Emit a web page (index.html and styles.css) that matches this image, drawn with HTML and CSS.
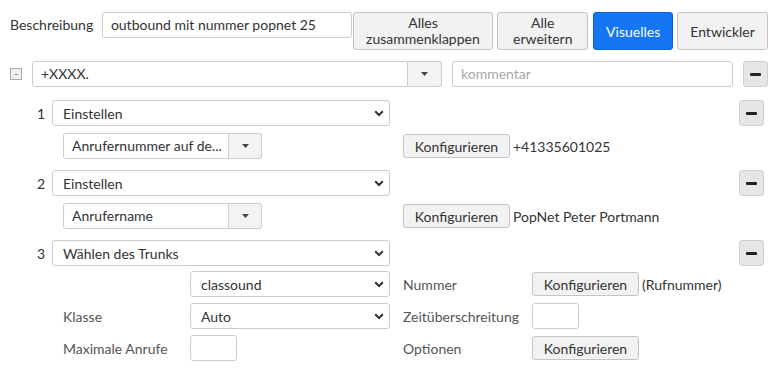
FILE: index.html
```html
<!DOCTYPE html>
<html lang="de">
<head>
<meta charset="utf-8">
<link rel="stylesheet" href="styles.css">
</head>
<body>
<div class="page">
  <div class="toolbar">
    <label class="desc-label">Beschreibung</label>
    <div class="input desc-input">outbound mit nummer popnet 25</div>
    <div class="btn two-line w-collapse"><span>Alles</span><span>zusammenklappen</span></div>
    <div class="btn two-line w-expand"><span>Alle</span><span>erweitern</span></div>
    <div class="btn primary w-visual">Visuelles</div>
    <div class="btn w-dev">Entwickler</div>
  </div>

  <div class="head-row">
    <span class="toggle">-</span>
    <div class="group head-group">
      <div class="input grow">+XXXX.</div>
      <div class="caret-btn w-caret">
        <svg width="7" height="4" viewBox="0 0 7 4"><path d="M0 0h7L3.5 4z" fill="#444"/></svg>
      </div>
    </div>
    <div class="input comment placeholder">kommentar</div>
    <div class="minus"><span></span></div>
  </div>

  <div class="steps">
    <div class="step">
      <div class="step-row">
        <span class="num">1</span>
        <div class="select step-select"><span>Einstellen</span><svg class="chev" width="10" height="7" viewBox="0 0 10 7"><path d="M1.2 1.2 5 5 8.8 1.2" fill="none" stroke="#333" stroke-width="2"/></svg></div>
        <div class="minus"><span></span></div>
      </div>
      <div class="sub-row">
        <div class="sub-left">
          <div class="group sub-group">
            <div class="input grow">Anrufernummer auf de...</div>
            <div class="caret-btn w-caret2">
              <svg width="7" height="4" viewBox="0 0 7 4"><path d="M0 0h7L3.5 4z" fill="#444"/></svg>
            </div>
          </div>
        </div>
        <div class="sub-right">
          <div class="btn small">Konfigurieren</div>
          <span class="value">+41335601025</span>
        </div>
      </div>
    </div>

    <div class="step">
      <div class="step-row">
        <span class="num">2</span>
        <div class="select step-select"><span>Einstellen</span><svg class="chev" width="10" height="7" viewBox="0 0 10 7"><path d="M1.2 1.2 5 5 8.8 1.2" fill="none" stroke="#333" stroke-width="2"/></svg></div>
        <div class="minus"><span></span></div>
      </div>
      <div class="sub-row">
        <div class="sub-left">
          <div class="group sub-group">
            <div class="input grow">Anrufername</div>
            <div class="caret-btn w-caret2">
              <svg width="7" height="4" viewBox="0 0 7 4"><path d="M0 0h7L3.5 4z" fill="#444"/></svg>
            </div>
          </div>
        </div>
        <div class="sub-right">
          <div class="btn small">Konfigurieren</div>
          <span class="value">PopNet Peter Portmann</span>
        </div>
      </div>
    </div>

    <div class="step">
      <div class="step-row">
        <span class="num">3</span>
        <div class="select step-select"><span>Wählen des Trunks</span><svg class="chev" width="10" height="7" viewBox="0 0 10 7"><path d="M1.2 1.2 5 5 8.8 1.2" fill="none" stroke="#333" stroke-width="2"/></svg></div>
        <div class="minus"><span></span></div>
      </div>
      <div class="trunk-grid">
        <span class="lbl"></span>
        <div class="select trunk-select"><span>classound</span><svg class="chev" width="10" height="7" viewBox="0 0 10 7"><path d="M1.2 1.2 5 5 8.8 1.2" fill="none" stroke="#333" stroke-width="2"/></svg></div>
        <span class="lbl rlbl">Nummer</span>
        <div class="ctrl"><div class="btn small w-conf">Konfigurieren</div><span class="value">(Rufnummer)</span></div>

        <span class="lbl">Klasse</span>
        <div class="select trunk-select"><span>Auto</span><svg class="chev" width="10" height="7" viewBox="0 0 10 7"><path d="M1.2 1.2 5 5 8.8 1.2" fill="none" stroke="#333" stroke-width="2"/></svg></div>
        <span class="lbl rlbl">Zeitüberschreitung</span>
        <div class="ctrl"><div class="input small-input"></div></div>

        <span class="lbl">Maximale Anrufe</span>
        <div class="ctrl"><div class="input small-input"></div></div>
        <span class="lbl rlbl">Optionen</span>
        <div class="ctrl"><div class="btn small w-conf">Konfigurieren</div></div>
      </div>
    </div>
  </div>
</div>
</body>
</html>
```

FILE: styles.css
```css
* { box-sizing: border-box; }
html, body { margin: 0; background: #fff; }
body {
  font-family: Lato, "Noto Sans", sans-serif;
  font-size: 14px;
  color: #333;
  width: 776px;
  height: 379px;
  overflow: hidden;
}
.page { padding: 12px 8px 0 10px; }

.toolbar { display: flex; align-items: flex-start; }
.desc-label { line-height: 26px; width: 92px; }
.input {
  height: 26px;
  border: 1px solid #ccc;
  border-radius: 3px;
  background: #fff;
  padding: 0 8px;
  line-height: 24px;
  white-space: nowrap;
  overflow: hidden;
}
.desc-input { width: 250px; }
.btn {
  border: 1px solid #c4c4c4;
  border-radius: 3px;
  background: #f2f2f2;
  color: #333;
  text-align: center;
  display: flex;
  align-items: center;
  justify-content: center;
  height: 38px;
  white-space: nowrap;
}
.two-line { flex-direction: column; line-height: 16px; padding-bottom: 1px; }
.w-collapse { width: 141px; margin-left: 1px; }
.w-expand { width: 91px; margin-left: 4px; }
.w-visual { width: 80px; margin-left: 5px; }
.w-dev { width: 91px; margin-left: 4px; }
.primary { background: #1475f5; border-color: #0f63d6; color: #fff; }

.head-row {
  display: flex;
  align-items: center;
  margin-top: 11px;
  height: 26px;
}
.toggle {
  width: 12px; height: 12px;
  border: 1px solid #aaa;
  background: #f0f0f0;
  font-size: 10px;
  line-height: 9px;
  text-align: center;
  color: #555;
  margin-right: 10px;
}
.group { display: flex; height: 26px; }
.group .input { border-radius: 3px 0 0 3px; }
.grow { flex: 1; }
.head-group { width: 410px; }
.caret-btn {
  border: 1px solid #ccc;
  border-left: none;
  border-radius: 0 3px 3px 0;
  background: #f3f3f3;
  display: flex; align-items: center; justify-content: center;
}
.w-caret { width: 34px; }
.w-caret2 { width: 33px; }
.comment { width: 281px; margin-left: 10px; }
.placeholder { color: #a8a8a8; }
.minus {
  width: 25px; height: 26px;
  border: 1px solid #cfcfcf;
  border-radius: 3px;
  background: #e6e6e6;
  display: flex; align-items: center; justify-content: center;
  margin-left: auto;
}
.minus span { width: 11px; height: 3px; background: #222; border-radius: 1px; }
.head-row .minus { margin-left: 10px; }

.steps { padding: 13px 4px 0 22px; }
.step { margin-bottom: 11px; }
.step-row { display: flex; align-items: center; height: 26px; }
.num { width: 20px; padding-right: 7px; text-align: right; }
.select {
  height: 26px;
  border: 1px solid #ccc;
  border-radius: 3px;
  background: #fff;
  display: flex;
  align-items: center;
  justify-content: space-between;
  padding: 0 5px 0 10px;
  white-space: nowrap;
}
.chev { flex: none; }
.step-select { width: 338px; }

.sub-row { display: flex; align-items: center; margin-top: 7px; height: 26px; }
.sub-left { width: 371px; padding-left: 31px; }
.sub-group { width: 199px; }
.sub-right { display: flex; align-items: center; }
.btn.small { height: 24px; width: 107px; }
.value { margin-left: 3px; }

.trunk-grid {
  display: grid;
  grid-template-columns: 127px 200px 142px auto;
  row-gap: 6px;
  grid-auto-rows: 26px;
  margin-top: 5px;
  margin-left: 31px;
  align-items: center;
}
.rlbl { padding-left: 13px; }
.trunk-select { width: 200px; }
.lbl { color: #555; }
.ctrl { display: flex; align-items: center; }
.small-input { width: 47px; }
.w-conf { width: 106px; }
```
